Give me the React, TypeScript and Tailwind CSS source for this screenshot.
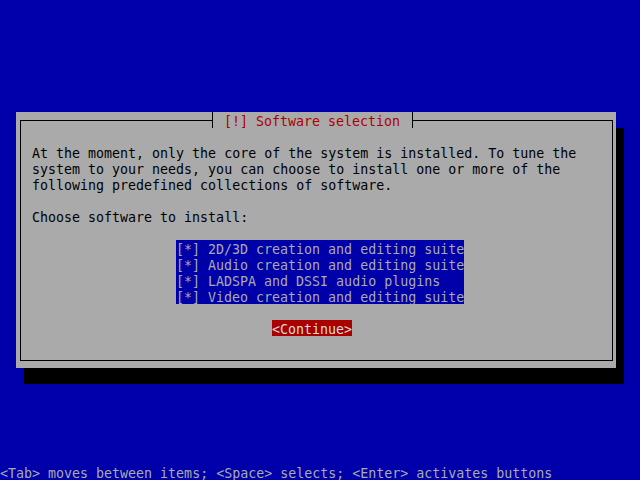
const items = [
  '2D/3D creation and editing suite',
  'Audio creation and editing suite',
  'LADSPA and DSSI audio plugins',
  'Video creation and editing suite',
];

function Line({ children, className = '' }: { children?: React.ReactNode; className?: string }) {
  return <div className={`h-[16px] leading-[19px] ${className}`}>{children}</div>;
}

function App() {
  return (
    <div
      className="w-[640px] h-[480px] bg-[#0000aa] flex flex-col overflow-hidden text-[13.3px] whitespace-pre"
      style={{ fontFamily: '"DejaVu Sans Mono", "Liberation Mono", monospace' }}
    >
      <div className="h-[112px]" />

      {/* dialog with drop shadow */}
      <div className="ml-[16px] w-[600px] h-[256px] bg-[#aaaaaa] shadow-[8px_16px_0_0_#000] flex flex-col pt-[8px] pl-[4px] pr-[3px] pb-[7px]">
        <div className="relative flex-1 border border-black flex flex-col pl-[11px] pt-[23px] text-black">
          <Line className="absolute top-[-9px] left-[191px] border-x border-black bg-[#aaaaaa] pl-[11px] pr-[12px] text-[#aa0000]">
            [!] Software selection
          </Line>

          <Line>At the moment, only the core of the system is installed. To tune the</Line>
          <Line>system to your needs, you can choose to install one or more of the</Line>
          <Line>following predefined collections of software.</Line>
          <Line />
          <Line>Choose software to install:</Line>
          <Line />

          <div className="ml-[144px] w-[288px] bg-[#0000aa] text-[#aaaaaa] flex flex-col">
            {items.map((item) => (
              <Line key={item}>[*] {item}</Line>
            ))}
          </div>

          <Line />
          <Line className="ml-[240px] w-[80px] bg-[#aa0000] text-[#dddddd]">&lt;Continue&gt;</Line>
        </div>
      </div>

      <div className="flex-1" />
      <Line className="text-[#aaaaaa]">
        &lt;Tab&gt; moves between items; &lt;Space&gt; selects; &lt;Enter&gt; activates buttons
      </Line>
    </div>
  );
}

export default App;
